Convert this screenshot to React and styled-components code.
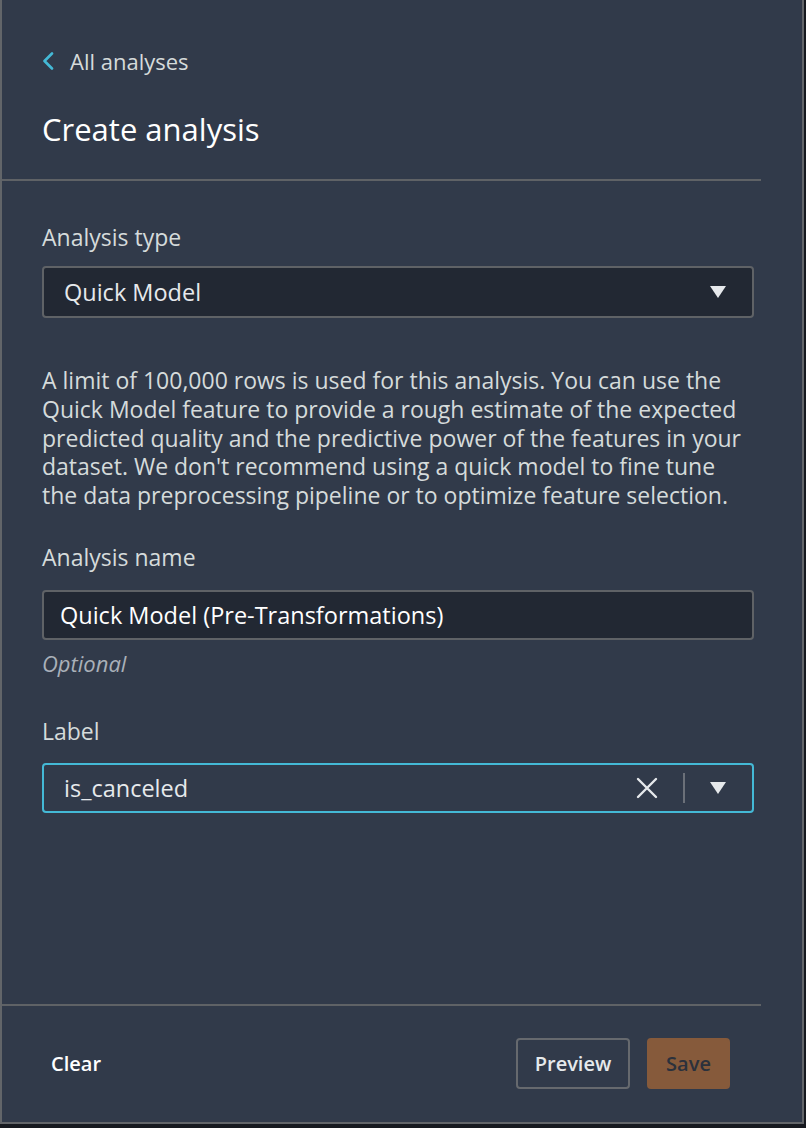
import React from "react";
import styled, { createGlobalStyle } from "styled-components";

const Global = createGlobalStyle`
  html, body { margin: 0; padding: 0; background: #16191f; }
  body { font-family: "Open Sans", "Noto Sans", sans-serif; }
  * { box-sizing: border-box; }
`;

const Panel = styled.div`
  width: 804px;
  height: 1124px;
  background: #313a4a;
  border-left: 2px solid #626569;
  border-right: 2px solid #626569;
  border-bottom: 2px solid #626569;
  display: flex;
  flex-direction: column;
`;

const Header = styled.header`
  padding: 47px 48px 0 40px;
  display: flex;
  flex-direction: column;
`;

const BackLink = styled.a`
  display: flex;
  align-items: center;
  gap: 16px;
  color: #d5dbdb;
  font-size: 22px;
  line-height: 28px;
  text-decoration: none;
  svg { flex: none; }
`;

const Title = styled.h1`
  margin: 36px 0 0;
  color: #ffffff;
  font-size: 31px;
  font-weight: 400;
  line-height: 36px;
`;

const Divider = styled.hr`
  margin: ${(p) => p.$top || 0}px 41px 0 0;
  border: none;
  height: 2px;
  background: #5f6266;
`;

const Body = styled.main`
  flex: 1;
  padding: 42px 48px 0 40px;
  display: flex;
  flex-direction: column;
`;

const Label = styled.label`
  color: #d5dbdb;
  font-size: 23px;
  line-height: 28px;
  margin-top: ${(p) => p.$top || 0}px;
`;

const Field = styled.div`
  margin-top: ${(p) => p.$top || 15}px;
  height: ${(p) => p.$h || 52}px;
  border: 2px solid ${(p) => (p.$focus ? "#44b9d6" : "#5f6266")};
  border-radius: 4px;
  background: ${(p) => (p.$focus ? "#313a4a" : "#222833")};
  display: flex;
  align-items: center;
  padding: 0 26px 0 ${(p) => p.$pl || 20}px;
`;

const Value = styled.span`
  flex: 1;
  color: ${(p) => (p.$bright ? "#ffffff" : "#e6e9ec")};
  font-size: 23.5px;
  line-height: 28px;
  white-space: nowrap;
`;

const Caret = styled.span`
  width: 0;
  height: 0;
  border-left: 8px solid transparent;
  border-right: 8px solid transparent;
  border-top: 12px solid #e6e9ec;
`;

const Sep = styled.span`
  width: 2px;
  height: 30px;
  background: #6b7079;
  margin: 0 25px 0 25px;
`;

const Para = styled.p`
  margin: 48px 0 0;
  color: #d5dbdb;
  font-size: 23px;
  line-height: 28.75px;
`;

const Hint = styled.div`
  margin-top: 11px;
  color: #a9b0b9;
  font-style: italic;
  font-size: 22px;
  line-height: 24px;
`;

const Footer = styled.footer`
  height: 116px;
  padding: 32px 72px 0 49px;
  display: flex;
  align-items: flex-start;
`;

const TextButton = styled.button`
  background: none;
  border: none;
  padding: 0;
  height: 51px;
  color: #ffffff;
  font-family: inherit;
  font-size: 20px;
  font-weight: 600;
  margin-right: auto;
`;

const Button = styled.button`
  height: 51px;
  width: ${(p) => p.$w}px;
  margin-left: ${(p) => p.$ml || 0}px;
  border-radius: 4px;
  font-family: inherit;
  font-size: 20px;
  font-weight: 600;
  border: 2px solid ${(p) => (p.$primary ? "#865a3b" : "#66696e")};
  background: ${(p) => (p.$primary ? "#865a3b" : "transparent")};
  color: ${(p) => (p.$primary ? "#2b313c" : "#e6e9ec")};
`;

const Chevron = () => (
  <svg width="12" height="18" viewBox="0 0 12 18">
    <path d="M10 1.5 L2.5 9 L10 16.5" fill="none" stroke="#44b9d6" strokeWidth="2.6" strokeLinecap="round" strokeLinejoin="round" />
  </svg>
);

const ClearIcon = () => (
  <svg width="22" height="22" viewBox="0 0 22 22">
    <path d="M2 2 L20 20 M20 2 L2 20" stroke="#e6e9ec" strokeWidth="2.4" strokeLinecap="round" />
  </svg>
);

export default function App() {
  return (
    <>
      <Global />
      <Panel>
        <Header>
          <BackLink href="#">
            <Chevron />
            All analyses
          </BackLink>
          <Title>Create analysis</Title>
        </Header>
        <Divider $top={32} />
        <Body>
          <Label>Analysis type</Label>
          <Field $top={15} $pl={20}>
            <Value>Quick Model</Value>
            <Caret />
          </Field>
          <Para>
            A limit of 100,000 rows is used for this analysis. You can use the Quick Model feature to provide a rough
            estimate of the expected predicted quality and the predictive power of the features in your dataset. We
            don't recommend using a quick model to fine tune the data preprocessing pipeline or to optimize feature
            selection.
          </Para>
          <Label $top={33}>Analysis name</Label>
          <Field $top={19} $h={50} $pl={16}>
            <Value $bright>Quick Model (Pre-Transformations)</Value>
          </Field>
          <Hint>Optional</Hint>
          <Label $top={42}>Label</Label>
          <Field $top={18} $h={50} $pl={20} $focus>
            <Value>is_canceled</Value>
            <ClearIcon />
            <Sep />
            <Caret />
          </Field>
        </Body>
        <Divider />
        <Footer>
          <TextButton>Clear</TextButton>
          <Button $w={114}>Preview</Button>
          <Button $w={83} $ml={17} $primary>Save</Button>
        </Footer>
      </Panel>
    </>
  );
}
